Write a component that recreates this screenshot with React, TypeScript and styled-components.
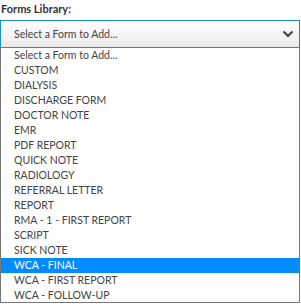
import React from "react";
import styled, { createGlobalStyle } from "styled-components";

const Global = createGlobalStyle`
  html, body { margin: 0; padding: 0; background: #fff; }
  body { font-family: Lato, "Noto Sans", sans-serif; }
`;

const Wrap = styled.div`
  width: 300px;
  display: flex;
  flex-direction: column;
`;

const Label = styled.div`
  font-weight: 700;
  font-size: 11px;
  color: #333;
  height: 20px;
  line-height: 17px;
  padding-left: 1px;
`;

const SelectBox = styled.div`
  height: 26px;
  border: 1px solid #1a8fc4;
  border-bottom: none;
  background: linear-gradient(#ffffff, #ebebeb);
  display: flex;
  align-items: center;
  justify-content: space-between;
  padding: 0 5px 0 13px;
  font-size: 10.5px;
  color: #444;
`;

const List = styled.div`
  border: 1px solid #777;
  display: flex;
  flex-direction: column;
`;

const Option = styled.div<{ $active?: boolean; $last?: boolean }>`
  height: ${(p) => (p.$last ? 14 : 15)}px;
  line-height: 15px;
  padding-left: 13px;
  font-size: 10.5px;
  color: ${(p) => (p.$active ? "#fff" : "#444")};
  background: ${(p) => (p.$active ? "#008cff" : "#fff")};
`;

const items = [
  "Select a Form to Add...",
  "CUSTOM",
  "DIALYSIS",
  "DISCHARGE FORM",
  "DOCTOR NOTE",
  "EMR",
  "PDF REPORT",
  "QUICK NOTE",
  "RADIOLOGY",
  "REFERRAL LETTER",
  "REPORT",
  "RMA - 1 - FIRST REPORT",
  "SCRIPT",
  "SICK NOTE",
  "WCA - FINAL",
  "WCA - FIRST REPORT",
  "WCA - FOLLOW-UP",
];

export default function App() {
  return (
    <>
      <Global />
      <Wrap>
        <Label>Forms Library:</Label>
        <SelectBox>
          <span>Select a Form to Add...</span>
          <svg width="12" height="8" viewBox="0 0 12 8">
            <path d="M1.5 1.5 L6 6 L10.5 1.5" fill="none" stroke="#444" strokeWidth="2.2" />
          </svg>
        </SelectBox>
        <List>
          {items.map((t, i) => (
            <Option key={t} $active={t === "WCA - FINAL"} $last={i === items.length - 1}>
              {t}
            </Option>
          ))}
        </List>
      </Wrap>
    </>
  );
}
